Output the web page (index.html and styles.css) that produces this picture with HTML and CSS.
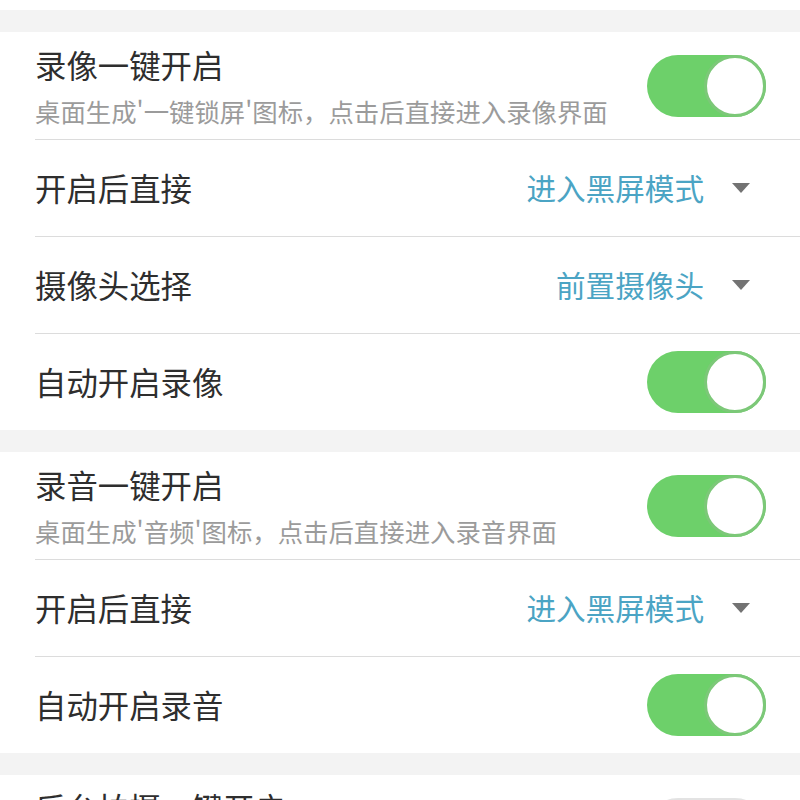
FILE: index.html
```html
<!DOCTYPE html>
<html lang="zh-CN">
<head>
<meta charset="utf-8">
<title>设置</title>
<link rel="stylesheet" href="styles.css">
</head>
<body>
<div class="top"></div>
<div class="gap"></div>
<div class="group">
  <div class="row tall">
    <div class="texts">
      <div class="title">录像一键开启</div>
      <div class="sub">桌面生成'一键锁屏'图标，点击后直接进入录像界面</div>
    </div>
    <div class="toggle on"><div class="knob"></div></div>
  </div>
  <div class="row">
    <div class="title">开启后直接</div>
    <div class="select"><span class="value">进入黑屏模式</span><span class="arrow"></span></div>
  </div>
  <div class="row">
    <div class="title">摄像头选择</div>
    <div class="select"><span class="value">前置摄像头</span><span class="arrow"></span></div>
  </div>
  <div class="row last">
    <div class="title">自动开启录像</div>
    <div class="toggle on"><div class="knob"></div></div>
  </div>
</div>
<div class="gap"></div>
<div class="group">
  <div class="row tall">
    <div class="texts">
      <div class="title">录音一键开启</div>
      <div class="sub">桌面生成'音频'图标，点击后直接进入录音界面</div>
    </div>
    <div class="toggle on"><div class="knob"></div></div>
  </div>
  <div class="row">
    <div class="title">开启后直接</div>
    <div class="select"><span class="value">进入黑屏模式</span><span class="arrow"></span></div>
  </div>
  <div class="row last">
    <div class="title">自动开启录音</div>
    <div class="toggle on"><div class="knob"></div></div>
  </div>
</div>
<div class="gap"></div>
<div class="group">
  <div class="row tall">
    <div class="texts">
      <div class="title">后台拍摄一键开启</div>
      <div class="sub">桌面生成'后台拍摄'图标，点击后直接开始拍摄</div>
    </div>
    <div class="toggle off"><div class="knob"></div></div>
  </div>
</div>
</body>
</html>
```
FILE: styles.css
```css
html, body {
  margin: 0;
  padding: 0;
  background: #ffffff;
  font-family: "Noto Sans CJK SC", "Noto Sans", sans-serif;
  overflow: hidden;
}
.top {
  height: 10px;
  background: #ffffff;
}
.gap {
  height: 22px;
  background: #f3f3f3;
}
.group {
  background: #ffffff;
}
.row {
  box-sizing: border-box;
  height: 97px;
  margin-left: 35px;
  padding-left: 0;
  padding-right: 34px;
  border-bottom: 1px solid #dcdcdc;
  display: flex;
  align-items: center;
  justify-content: space-between;
}
.row.tall {
  height: 108px;
}
.row.last {
  border-bottom: none;
  height: 96px;
}
.texts {
  display: flex;
  flex-direction: column;
  align-self: flex-start;
  padding-top: 13px;
}
.title {
  font-size: 31.4px;
  line-height: 40px;
  color: #2e2e2e;
  white-space: nowrap;
}
.sub {
  margin-top: 10px;
  font-size: 25.4px;
  line-height: 32px;
  color: #9b9b9b;
  white-space: nowrap;
}
.select {
  display: flex;
  align-items: center;
  gap: 28px;
  margin-right: 16px;
}
.value {
  font-size: 29.6px;
  line-height: 40px;
  color: #4ba4c4;
}
.arrow {
  width: 0;
  height: 0;
  border-left: 9px solid transparent;
  border-right: 9px solid transparent;
  border-top: 10px solid #737373;
}
.toggle {
  box-sizing: border-box;
  width: 119px;
  height: 62px;
  border-radius: 31px;
  display: flex;
  flex-shrink: 0;
}
.toggle.on {
  background: #6dd06a;
  justify-content: flex-end;
}
.toggle.off {
  background: #ffffff;
  border: 2px solid #e3e3e3;
  justify-content: flex-start;
}
.knob {
  box-sizing: border-box;
  width: 62px;
  height: 62px;
  border-radius: 50%;
  background: #ffffff;
}
.toggle.on .knob {
  border: 3px solid #7cc878;
}
.toggle.off .knob {
  width: 58px;
  height: 58px;
  border: 1px solid #e3e3e3;
  box-shadow: 0 2px 3px rgba(0,0,0,0.15);
}
```
